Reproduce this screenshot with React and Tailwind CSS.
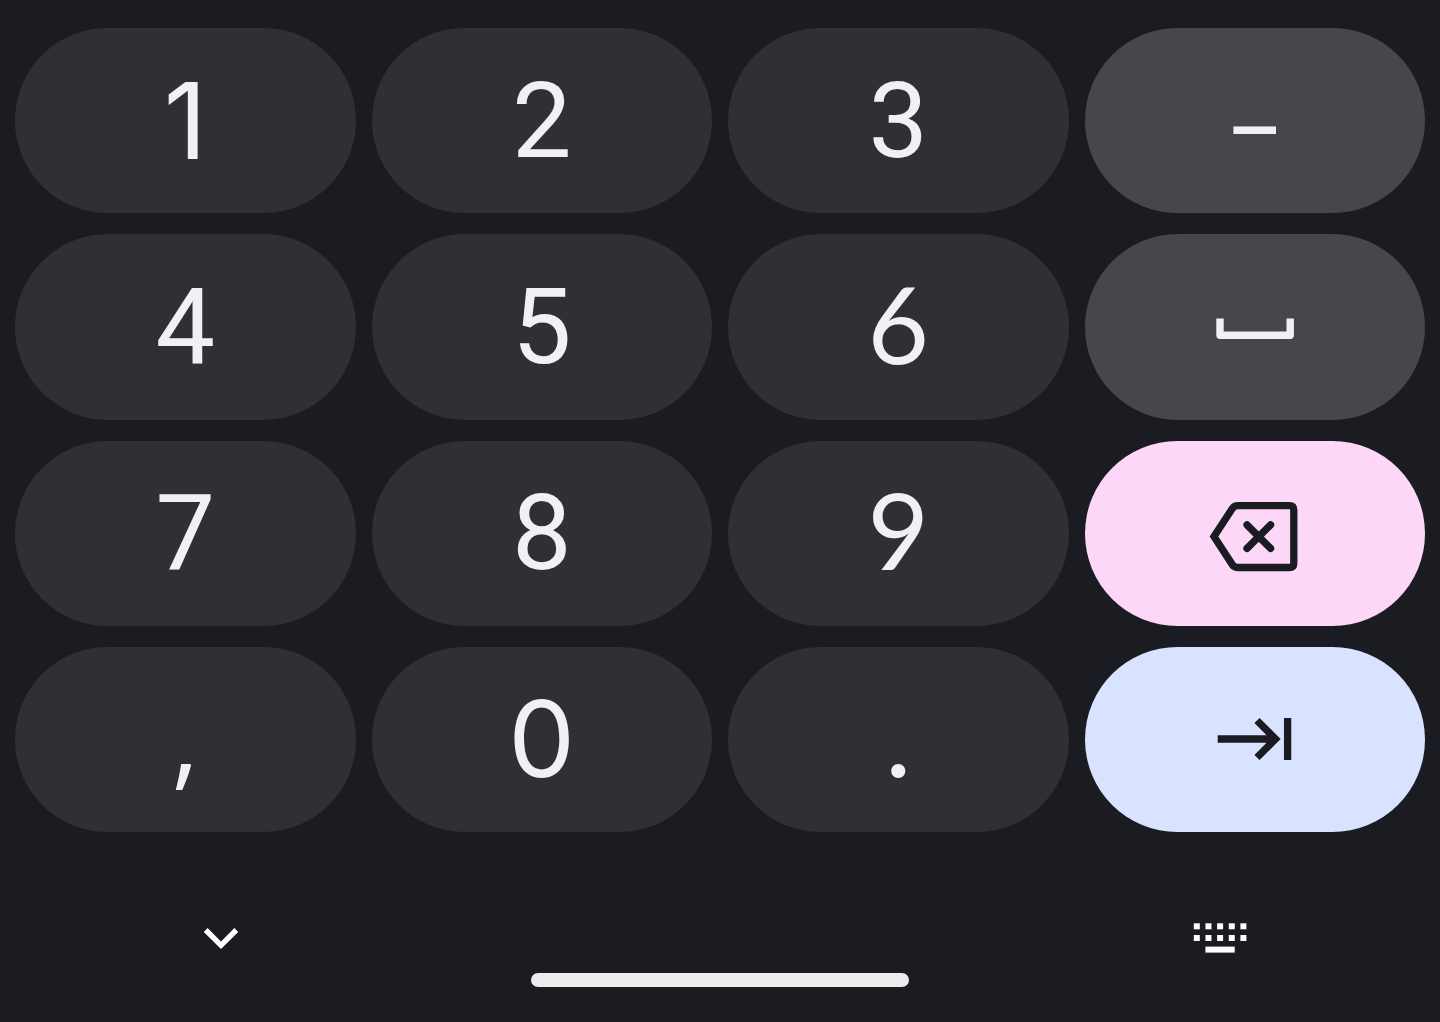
const tones = {
  digit: "bg-[#2f3036] text-[#f1f0f7]",
  symbol: "bg-[#46474c] text-[#f1f0f7]",
  erase: "bg-[#fcd7f8] text-[#1b1c21]",
  next: "bg-[#d9e2ff] text-[#1b1c21]",
};

const faces = {
  roboto: "font-['Roboto',sans-serif]",
  inter: "font-['Inter',sans-serif]",
  lato: "font-['Lato',sans-serif] pb-2",
  dash: "font-['Lato',sans-serif] font-medium",
  comma: "font-['Open_Sans',sans-serif] font-medium pb-2",
};

function SpaceIcon() {
  return (
    <svg viewBox="0 0 96 96" className="size-24" fill="none" stroke="currentColor" strokeWidth="7.4" strokeLinejoin="round" aria-hidden="true">
      <path d="M13 39.5V56.3H83.2V39.5" />
    </svg>
  );
}

function BackspaceIcon() {
  return (
    <svg viewBox="0 0 96 96" className="size-24" fill="none" stroke="currentColor" strokeWidth="7.3" aria-hidden="true">
      <path d="M7 51.6L25.3 23.6Q27.3 20.7 31 20.7H82.5Q86.8 20.7 86.8 25V78.2Q86.8 82.5 82.5 82.5H31Q27.3 82.5 25.3 79.6Z" />
      <path d="M40 39.8L63.6 63.4M63.6 39.8L40 63.4" strokeLinecap="round" />
    </svg>
  );
}

function TabIcon() {
  return (
    <svg viewBox="0 0 96 96" className="size-24" fill="none" stroke="currentColor" strokeWidth="7.3" aria-hidden="true">
      <path d="M10.7 48H68M50 29.5L68.5 48L50 66.5M80.6 27V69" />
    </svg>
  );
}

function ChevronIcon() {
  return (
    <svg viewBox="0 0 48 48" className="size-12" fill="none" stroke="currentColor" strokeWidth="5.4" aria-hidden="true">
      <path d="M9.7 16L25 31.3L40.3 16" />
    </svg>
  );
}

function KeyboardIcon() {
  return (
    <svg viewBox="0 0 56 48" className="h-12 w-14" fill="currentColor" aria-hidden="true">
      {[0, 1, 2, 3, 4].map((i) => (
        <g key={i}>
          <rect x={1.8 + i * 11.65} y="9.3" width="6" height="6" />
          <rect x={1.8 + i * 11.65} y="21" width="6" height="6" />
        </g>
      ))}
      <rect x="13.4" y="32.6" width="29.3" height="6" />
    </svg>
  );
}

const keys = [
  { text: "1", face: "inter" },
  { text: "2" },
  { text: "3" },
  { text: "–", tone: "symbol", face: "dash" },
  { text: "4" },
  { text: "5" },
  { text: "6", face: "lato" },
  { label: "Space", icon: <SpaceIcon />, tone: "symbol" },
  { text: "7" },
  { text: "8" },
  { text: "9", face: "lato" },
  { label: "Backspace", icon: <BackspaceIcon />, tone: "erase" },
  { text: ",", face: "comma" },
  { text: "0", face: "inter" },
  { text: ".", face: "inter" },
  { label: "Next field", icon: <TabIcon />, tone: "next" },
];

function Key({ text, label, icon, tone = "digit", face = "roboto" }) {
  return (
    <button
      type="button"
      aria-label={label}
      className={`flex items-center justify-center rounded-full text-[106px] leading-none ${faces[face]} ${tones[tone]}`}
    >
      {icon ?? text}
    </button>
  );
}

export default function App() {
  return (
    <main className="flex min-h-screen flex-col bg-[#1b1c21] pt-7">
      <div className="grid flex-1 grid-cols-4 grid-rows-4 gap-x-4 gap-y-[21px] px-[15px]">
        {keys.map((key) => (
          <Key key={key.text ?? key.label} {...key} />
        ))}
      </div>
      <footer className="flex flex-col items-center pt-[82px] pb-[35px] text-white">
        <div className="flex w-full justify-between pr-48 pl-[196px]">
          <button type="button" aria-label="Hide keyboard">
            <ChevronIcon />
          </button>
          <button type="button" aria-label="Switch keyboard">
            <KeyboardIcon />
          </button>
        </div>
        <div className="mt-[11px] h-3.5 w-[378px] rounded-full bg-[#ececec]" />
      </footer>
    </main>
  );
}
